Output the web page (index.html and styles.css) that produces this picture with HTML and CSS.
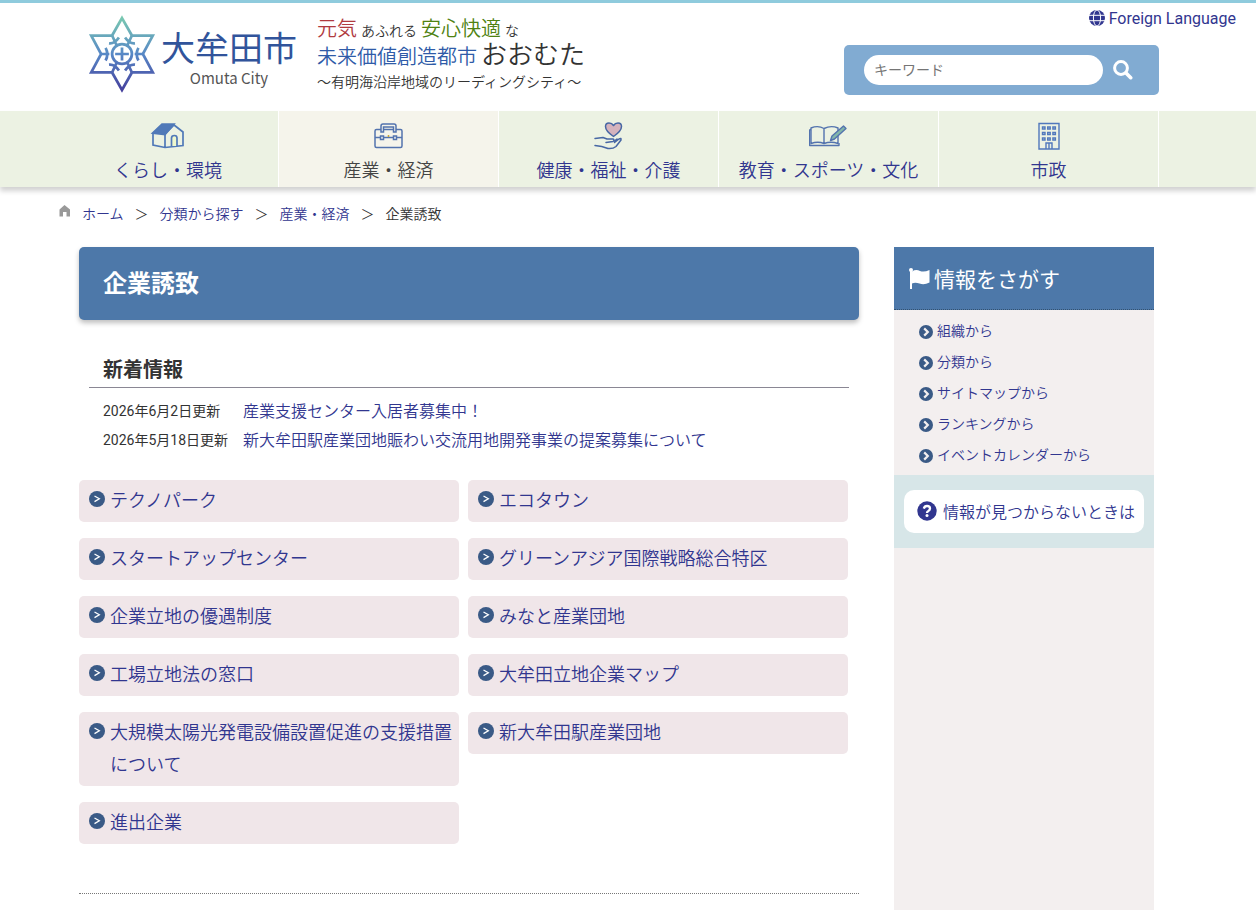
FILE: index.html
```html
<!DOCTYPE html>
<html lang="ja">
<head>
    <meta charset="UTF-8">
    <meta name="viewport" content="width=device-width, initial-scale=1.0">
    <title>企業誘致 - 大牟田市</title>
    <link rel="stylesheet" href="styles.css">
</head>
<body>
    <!-- アイコン定義 -->
    <svg class="defs" width="0" height="0" aria-hidden="true">
        <symbol id="arrow" viewBox="0 0 16 16">
            <circle cx="8" cy="8" r="8" fill="#3a5a86"/>
            <path d="M5.5 5 L10.3 7.8 L5.5 10.6" fill="none" stroke="#fff" stroke-width="1.3"/>
        </symbol>
        <symbol id="chevron" viewBox="0 0 14 14">
            <circle cx="7" cy="7" r="7" fill="#3a5a86"/>
            <path d="M5.2 3.4 L8.8 7 L5.2 10.6" fill="none" stroke="#f3efef" stroke-width="2.2"/>
        </symbol>
    </svg>

    <!-- ヘッダー -->
    <header class="header">
        <a class="foreign" href="#">
            <svg width="16" height="16" viewBox="0 0 16 16" aria-hidden="true">
                <circle cx="8" cy="8" r="8" fill="#31368f"/>
                <path d="M0 5.3H16M0 10.7H16" stroke="#fff" stroke-width="1" fill="none"/>
                <ellipse cx="8" cy="8" rx="3.6" ry="8" stroke="#fff" stroke-width="1" fill="none"/>
            </svg>
            Foreign Language
        </a>
        <a class="logo" href="#">
            <svg class="emblem" width="70" height="80" viewBox="25 43 204 234" aria-hidden="true">
                <defs>
                    <linearGradient id="grad" gradientUnits="userSpaceOnUse" x1="0" y1="48" x2="0" y2="272">
                        <stop offset="0" stop-color="#7acbb0"/>
                        <stop offset="0.5" stop-color="#5888c6"/>
                        <stop offset="1" stop-color="#433c9b"/>
                    </linearGradient>
                </defs>
                <g fill="none" stroke="url(#grad)" stroke-width="8">
                    <path d="M127 55 L156 106 H217 L188 160 L217 214 H156 L127 265 L98 214 H37 L66 160 L37 106 H98 Z"/>
                    <circle cx="127" cy="160" r="29"/>
                    <path d="M127 141 V179.1 M107 160 H147.1"/>
                    <path d="M64 160 H90 M79 142 Q89 160 79 179 M98 106 L112 136 M89 129 Q105 131 118 112 M98 214 L112 184 M89 191 Q105 189 118 208"/>
                    <path d="M190 160 H164 M175 142 Q165 160 175 179 M156 106 L142 136 M165 129 Q149 131 136 112 M156 214 L142 184 M165 191 Q149 189 136 208"/>
                </g>
            </svg>
            <span class="city">
                <span class="city-name">大牟田市</span>
                <span class="city-en">Omuta City</span>
            </span>
            <span class="slogan">
                <span class="slogan-line"><b class="red">元気</b><small>あふれる</small><b class="green">安心快適</b><small>な</small></span>
                <span class="slogan-line"><b class="blue">未来価値創造都市</b><strong>おおむた</strong></span>
                <span class="slogan-sub">～有明海沿岸地域のリーディングシティ～</span>
            </span>
        </a>
        <form class="search">
            <input type="text" placeholder="キーワード" aria-label="キーワード">
            <button type="button" aria-label="検索">
                <svg width="20" height="20" viewBox="0 0 20 20" aria-hidden="true">
                    <circle cx="8" cy="8" r="6.4" fill="none" stroke="#fff" stroke-width="3"/>
                    <path d="M13 13 L17.7 17.7" stroke="#fff" stroke-width="3.6" stroke-linecap="round"/>
                </svg>
            </button>
        </form>
    </header>

    <!-- グローバルナビ -->
    <nav class="gnav">
        <ul>
            <li><a href="#">
                <svg width="40" height="30" viewBox="0 0 40 30" fill="none" stroke="#5079b8" stroke-width="1.7" aria-hidden="true">
                    <path d="M4.5 12 L14 3 H26 L17 13.5 Z" fill="#5079b8"/>
                    <path d="M17 13 L26 4 L35 11 V24.5 L17 26.5 L5 24 V12 M17 13 V26.5"/>
                    <path d="M23.5 25 V17 Q23.5 14.5 26.5 14.5 Q29 14.5 29 17 V25" fill="#eef8cd"/>
                </svg>
                くらし・環境</a></li>
            <li class="current"><a href="#">
                <svg width="40" height="30" viewBox="0 0 40 30" fill="none" stroke="#5373ae" stroke-width="1.5" aria-hidden="true">
                    <rect x="6" y="8.5" width="27" height="18" rx="1.5"/>
                    <path d="M12 11 V5 Q12 3 14 3 H25 Q27 3 27 5 V11 H24.5 V6 H14.5 V11 Z" fill="#f5f4eb"/>
                    <path d="M6 16.5 H33"/>
                    <rect x="11.5" y="15" width="3" height="3.5" fill="#f5f4eb"/>
                    <rect x="24.5" y="15" width="3" height="3.5" fill="#f5f4eb"/>
                    <path d="M19.5 14 V16" stroke="#c9a634"/>
                </svg>
                産業・経済</a></li>
            <li><a href="#">
                <svg width="40" height="30" viewBox="1 0 40 30" fill="none" stroke="#4767a4" stroke-width="1.5" stroke-linecap="round" stroke-linejoin="round" aria-hidden="true">
                    <path d="M25.5 15.5 Q17.5 10 17.5 5.5 Q17.5 2 21 2 Q24 2 25.5 4.5 Q27 2 30 2 Q33.5 2 33.5 5.5 Q33.5 10 25.5 15.5 Z" fill="#d5b3bd"/>
                    <path d="M7 17.5 L15 16.5 L19 18 H25 Q27 19 25 20.5 L18 21.5"/>
                    <path d="M7 24.5 Q14 25 20 27.5 Q25 28 28 25.5 L33 19 Q33.5 16.5 31 18 L26.5 21.5 M29 18 L26.5 20"/>
                </svg>
                健康・福祉・介護</a></li>
            <li><a href="#">
                <svg width="40" height="30" viewBox="1 0 40 30" fill="none" stroke="#5373ae" stroke-width="1.4" stroke-linejoin="round" aria-hidden="true">
                    <path d="M16 7.5 Q10 4 3 7 V22.5 Q10 20 16 22.5 Q23 20 30 22.5 V7 Q23 4 16 7.5 V22.5"/>
                    <path d="M3 8.5 L1.7 9 V24.5 H31 V22"/>
                    <path d="M22.5 19.5 L24 15 L35.5 5 L38 7.5 L26.5 18 Z" fill="#83b7aa"/>
                </svg>
                教育・スポーツ・文化</a></li>
            <li><a href="#">
                <svg width="40" height="30" viewBox="0 0 40 30" fill="none" stroke="#5078bc" stroke-width="1.4" aria-hidden="true">
                    <path d="M10 2.5 H30 V28 H10 Z M17 28 V22 H23 V28 M20 22 V28"/>
                    <path d="M13.5 6 h2.5 v2 h-2.5 z m5.2 0 h2.5 v2 h-2.5 z m5.2 0 h2.5 v2 h-2.5 z M13.5 11.5 h2.5 v2 h-2.5 z m5.2 0 h2.5 v2 h-2.5 z m5.2 0 h2.5 v2 h-2.5 z M13.5 17 h2.5 v2 h-2.5 z m5.2 0 h2.5 v2 h-2.5 z m5.2 0 h2.5 v2 h-2.5 z"/>
                </svg>
                市政</a></li>
        </ul>
    </nav>

    <!-- パンくず -->
    <div class="breadcrumb">
        <svg width="12" height="12" viewBox="0 0 12 12" aria-hidden="true">
            <path d="M6.5 0 L12 4.5 V11.5 H8.5 V7 H5 V11.5 H1.5 V4.5 Z" fill="#999"/>
        </svg>
        <a href="#">ホーム</a><span>＞</span><a href="#">分類から探す</a><span>＞</span><a href="#">産業・経済</a><span>＞</span>企業誘致
    </div>

    <div class="container">
        <main class="main">
            <h1>企業誘致</h1>

            <!-- 新着情報 -->
            <section class="news">
                <h2>新着情報</h2>
                <dl>
                    <dt>2026年6月2日更新</dt>
                    <dd><a href="#">産業支援センター入居者募集中！</a></dd>
                    <dt>2026年5月18日更新</dt>
                    <dd><a href="#">新大牟田駅産業団地賑わい交流用地開発事業の提案募集について</a></dd>
                </dl>
            </section>

            <!-- 分類一覧 -->
            <ul class="category">
                <li><svg><use href="#arrow"/></svg><a href="#">テクノパーク</a></li>
                <li><svg><use href="#arrow"/></svg><a href="#">エコタウン</a></li>
                <li><svg><use href="#arrow"/></svg><a href="#">スタートアップセンター</a></li>
                <li><svg><use href="#arrow"/></svg><a href="#">グリーンアジア国際戦略総合特区</a></li>
                <li><svg><use href="#arrow"/></svg><a href="#">企業立地の優遇制度</a></li>
                <li><svg><use href="#arrow"/></svg><a href="#">みなと産業団地</a></li>
                <li><svg><use href="#arrow"/></svg><a href="#">工場立地法の窓口</a></li>
                <li><svg><use href="#arrow"/></svg><a href="#">大牟田立地企業マップ</a></li>
                <li><svg><use href="#arrow"/></svg><a href="#">大規模太陽光発電設備設置促進の支援措置について</a></li>
                <li><svg><use href="#arrow"/></svg><a href="#">新大牟田駅産業団地</a></li>
                <li><svg><use href="#arrow"/></svg><a href="#">進出企業</a></li>
            </ul>
            <hr>
        </main>

        <!-- サイドバー -->
        <aside class="side">
            <h2>
                <svg width="21" height="21" viewBox="0 0 21 21" aria-hidden="true">
                    <circle cx="2" cy="2" r="2" fill="#fff"/>
                    <path d="M1 2 H3 V3.5 Q7 1 11 3 Q15 4.5 20.5 2 V14.5 Q15 17.5 10.5 15.5 Q6 14 3 15.5 V21 H1 Z" fill="#fff"/>
                </svg>
                情報をさがす
            </h2>
            <ul>
                <li><svg><use href="#chevron"/></svg><a href="#">組織から</a></li>
                <li><svg><use href="#chevron"/></svg><a href="#">分類から</a></li>
                <li><svg><use href="#chevron"/></svg><a href="#">サイトマップから</a></li>
                <li><svg><use href="#chevron"/></svg><a href="#">ランキングから</a></li>
                <li><svg><use href="#chevron"/></svg><a href="#">イベントカレンダーから</a></li>
            </ul>
            <div class="help">
                <a href="#">
                    <svg width="20" height="20" viewBox="0 0 20 20" aria-hidden="true">
                        <circle cx="10" cy="10" r="9.7" fill="#31368f"/>
                        <path d="M6.8 7.6 Q7.5 5 10 5 Q13 5 13 7.5 Q13 9 11.3 10 Q10 10.6 10 12" fill="none" stroke="#fff" stroke-width="2.3"/>
                        <circle cx="10" cy="14.6" r="1.5" fill="#fff"/>
                    </svg>
                    情報が見つからないときは
                </a>
            </div>
        </aside>
    </div>
</body>
</html>
```
FILE: styles.css
```css
* {
    box-sizing: border-box;
}

body {
    margin: 0;
    min-height: 100vh;
    display: flex;
    flex-direction: column;
    border-top: 3px solid #8fcbdd;
    background-color: #fff;
    color: #333;
    font-family: Roboto, "Noto Sans CJK JP", sans-serif;
    font-size: 16px;
    font-weight: 350;
}

a {
    color: #31368f;
    text-decoration: none;
}

a:hover {
    text-decoration: underline;
}

ul, dl, dd, h1, h2 {
    margin: 0;
    padding: 0;
}

ul {
    list-style: none;
}

svg {
    flex-shrink: 0;
}

.defs {
    position: absolute;
}

/* ヘッダー */
.header {
    display: grid;
    grid-template-columns: 1fr minmax(0, 1140px) 1fr;
    grid-template-rows: 42px 66px;
}

.foreign {
    grid-column: 1 / 4;
    grid-row: 1;
    justify-self: end;
    display: flex;
    align-items: center;
    gap: 4px;
    height: 30px;
    padding-right: 20px;
    font-weight: 400;
}

.logo {
    grid-column: 2;
    grid-row: 1 / 3;
    justify-self: start;
    display: flex;
    padding: 11px 0 0 29px;
    color: #333;
}

.logo:hover {
    text-decoration: none;
}

.city {
    display: flex;
    flex-direction: column;
    align-items: center;
    padding: 12px 0 0 4px;
    font-family: "Noto Sans CJK JP", sans-serif;
    font-weight: 400;
}

.city-name {
    color: #31549b;
    font-size: 34px;
    line-height: 42px;
}

.city-en {
    color: #555;
    font-size: 15px;
    line-height: 20px;
}

.slogan {
    padding: 2px 0 0 20px;
    font-family: "Noto Sans CJK JP", sans-serif;
}

.slogan-line {
    display: flex;
    align-items: baseline;
    gap: 4px;
    height: 25px;
    line-height: 24px;
}

.slogan b {
    font-size: 20px;
    font-weight: 350;
}

.slogan small {
    font-size: 14px;
}

.slogan strong {
    font-size: 26px;
    font-weight: 350;
}

.slogan .red {
    color: #b03a3f;
}

.slogan .green {
    color: #4f8212;
}

.slogan .blue {
    color: #2f5ba8;
}

.slogan-sub {
    font-size: 14px;
    line-height: 30px;
}

.search {
    grid-column: 2;
    grid-row: 2;
    justify-self: end;
    display: flex;
    align-items: center;
    width: 315px;
    height: 50px;
    margin-right: 39px;
    padding-left: 20px;
    border-radius: 5px;
    background-color: #81abd2;
}

.search input {
    width: 239px;
    height: 30px;
    padding: 0 10px;
    border: none;
    border-radius: 15px;
    font-family: inherit;
    font-size: 14px;
}

.search input::placeholder {
    color: #757575;
}

.search button {
    display: flex;
    padding: 0 10px;
    border: none;
    background: none;
    cursor: pointer;
}

/* グローバルナビ */
.gnav {
    background-color: #ecf2e3;
    box-shadow: 0 4px 5px rgba(0, 0, 0, 0.18);
}

.gnav ul {
    display: flex;
    max-width: 1140px;
    margin: 0 auto;
}

.gnav li {
    width: 220px;
    border-right: 1px solid #fff;
}

.gnav li:first-child {
    width: 221px;
}

.gnav a {
    display: flex;
    flex-direction: column;
    align-items: center;
    height: 76px;
    padding-top: 10px;
    font-size: 18px;
    line-height: 32px;
}

.gnav .current {
    background-color: #f5f4eb;
}

.gnav .current a {
    color: #444;
}

.gnav svg {
    margin-bottom: 4px;
}

/* パンくず */
.breadcrumb {
    display: flex;
    align-items: center;
    width: 100%;
    max-width: 1140px;
    margin: 0 auto;
    padding-top: 14px;
    font-size: 14px;
    line-height: 26px;
}

.breadcrumb svg {
    margin: 0 12px 6px 0;
}

.breadcrumb span {
    margin: 0 11px;
}

.container {
    flex: 1;
    display: flex;
    gap: 35px;
    width: 100%;
    max-width: 1140px;
    margin: 0 auto;
    padding: 20px 44px 0 21px;
}

/* メイン */
.main {
    flex: 1;
}

.main h1 {
    padding: 19px 24px 17px;
    border-radius: 5px;
    background-color: #4d78a9;
    box-shadow: 0 3px 5px rgba(0, 0, 0, 0.25);
    color: #fff;
    font-size: 24px;
    line-height: 37px;
}

.news {
    padding: 34px 10px 0;
}

.news h2 {
    padding: 0 14px;
    border-bottom: 1px solid #8a8794;
    font-size: 20px;
    line-height: 33px;
}

.news dl {
    display: grid;
    grid-template-columns: 140px 1fr;
    padding: 9px 14px 0;
    line-height: 29px;
}

.news dt {
    font-size: 14px;
    font-weight: 400;
}

.category {
    display: grid;
    grid-template-columns: 1fr 1fr;
    align-items: start;
    gap: 16px 9px;
    padding: 25px 11px 49px 0;
}

.category li {
    display: flex;
    gap: 5px;
    padding: 5px 5px 5px 10px;
    border-radius: 5px;
    background-color: #f0e6e9;
    font-size: 18px;
    line-height: 32px;
}

.category svg {
    width: 16px;
    height: 16px;
    margin-top: 6px;
}

.main hr {
    margin: 0;
    border: none;
    border-top: 1px dotted #777;
}

/* サイドバー */
.side {
    width: 260px;
    background-color: #f3efef;
}

.side h2 {
    display: flex;
    align-items: center;
    gap: 4px;
    height: 63px;
    padding: 0 15px;
    border-bottom: 1px dotted #33516f;
    background-color: #4d78a9;
    color: #fff;
    font-size: 21px;
    font-weight: 400;
}

.side ul {
    padding: 6px 25px 4px;
}

.side li {
    display: flex;
    align-items: center;
    gap: 4px;
    font-size: 14px;
    line-height: 31px;
}

.side li svg {
    width: 14px;
    height: 14px;
}

.help {
    padding: 15px 10px;
    background-color: #d7e6e8;
}

.help a {
    display: flex;
    align-items: center;
    gap: 6px;
    height: 43px;
    padding: 0 0 1px 13px;
    border-radius: 10px;
    background-color: #fff;
}
```
